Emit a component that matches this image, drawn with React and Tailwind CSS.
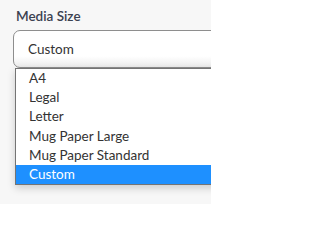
import React from "react";

const options = ["A4", "Legal", "Letter", "Mug Paper Large", "Mug Paper Standard", "Custom"];

export default function App() {
  return (
    <div
      className="relative w-[211px] h-[204px] overflow-hidden bg-[#f7f7f7]"
      style={{ fontFamily: "Lato, 'Noto Sans', sans-serif" }}
    >
      <div className="pt-[8px] pl-[16px] text-[13.5px] leading-[17px] font-semibold text-[#3b4150]">
        Media Size
      </div>
      <div className="mt-[5px] ml-[13px] w-[320px] min-w-[320px] h-[38px] rounded-[7px] border border-[#8e8e8e] bg-linear-to-b from-white via-white via-70% to-[#ececec] flex items-center pl-[14px] text-[13.5px] text-[#333]">
        Custom
      </div>
      <div className="ml-[15px] w-[320px] min-w-[320px] border border-[#747474] bg-white shadow-[0_3px_8px_rgba(0,0,0,0.18)]">
        {options.map((o) => (
          <div
            key={o}
            className={
              "h-[19.2px] leading-[19.2px] pl-[13px] text-[13.5px] " +
              (o === "Custom" ? "bg-[#1e90ff] text-white" : "text-[#333]")
            }
          >
            {o}
          </div>
        ))}
      </div>
    </div>
  );
}
